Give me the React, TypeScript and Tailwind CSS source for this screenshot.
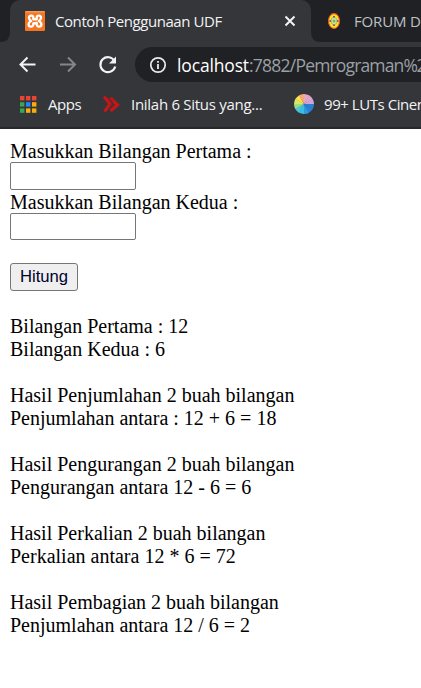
import React from "react";

const ui = "font-['Open_Sans','Noto_Sans',sans-serif] whitespace-nowrap";

function XamppIcon() {
  return (
    <svg width="20" height="20" viewBox="0 0 20 20" className="shrink-0">
      <rect width="20" height="20" rx="1" fill="#f37623" />
      <path d="M.5 .8h19" stroke="#f9a468" strokeWidth="1.200" />
      <path
        d="M8.300 8.300V6.200C8.300 4 4 4 4 6.700C4 8.300 5 9.200 6.200 10C4.800 10.700 3.600 11.600 3.600 13.400C3.600 16.300 8.300 16.300 8.300 13.600V12.300L11.700 12V13.600C11.700 16.300 16.400 16.300 16.400 13.400C16.400 11.600 15.200 10.700 13.800 10C15 9.200 16 8.300 16 6.700C16 4 11.700 4 11.700 6.200V8.300Z"
        fill="none"
        stroke="#fff"
        strokeWidth="2.300"
        strokeLinejoin="round"
      />
    </svg>
  );
}

function CampusIcon() {
  return (
    <svg width="14" height="18" viewBox="0 0 14 18" className="shrink-0">
      <ellipse cx="7" cy="9" rx="5.500" ry="7.400" fill="#ffe61c" stroke="#ed5a2c" strokeWidth="1.100" />
      <ellipse cx="7" cy="9" rx="3" ry="3.800" fill="#d8dc9e" stroke="#b5a94c" strokeWidth=".8" />
      <path d="M6.200 4h1.600v1.600H6.200zM6.200 12.400h1.600V14H6.200zM2.400 8.200H4v1.600H2.400zM10 8.200h1.600v1.600H10z" fill="#3c4bb5" />
      <circle cx="7" cy="9" r="1.500" fill="#77bd43" />
    </svg>
  );
}

function AppsIcon() {
  const colors = ["#ea4335", "#ea4335", "#ea4335", "#34a853", "#2684fc", "#fbad09", "#34a853", "#fbad09", "#fbad09"];
  return (
    <svg width="17" height="17" viewBox="0 0 17 17" className="shrink-0">
      {colors.map((c, i) => (
        <rect key={i} x={(i % 3) * 6} y={Math.floor(i / 3) * 6.2} width="4.400" height="4.400" fill={c} />
      ))}
    </svg>
  );
}

function WheelIcon() {
  const colors = ["#e6a8c6", "#e2a6cc", "#d0a6d8", "#287fd5", "#2f7fd2", "#2b9be0", "#38bee6", "#48c6dc", "#9bdc83", "#d6e86a", "#ffe14e", "#f5a878"];
  return (
    <svg width="20" height="20" viewBox="-10 -10 20 20" className="shrink-0">
      {colors.map((c, i) => (
        <path key={i} d="M0 0V-10A10 10 0 0 1 5.300-8.500Z" fill={c} transform={`rotate(${i * 30})`} />
      ))}
    </svg>
  );
}

function TabStrip() {
  return (
    <div className="flex h-[42px] bg-[#202124]">
      <svg width="10" height="42" className="shrink-0">
        <path d="M0 42Q10 42 10 32V42Z" fill="#35363a" />
      </svg>
      <div className="flex h-[42px] w-[301px] shrink-0 items-center rounded-t-[10px] bg-[#35363a] pl-[15px]">
        <XamppIcon />
        <span className={`${ui} ml-[10px] w-[220px] text-[15px] leading-[20px] tracking-[-0.430px] text-[#f1f3f4]`}>
          Contoh Penggunaan UDF
        </span>
        <svg width="12" height="12" viewBox="0 0 12 12" className="ml-[9px] shrink-0">
          <path d="M1.500 1.500l9 9m0-9l-9 9" stroke="#f1f3f4" strokeWidth="2" />
        </svg>
      </div>
      <svg width="10" height="42" className="shrink-0">
        <path d="M0 32Q0 42 10 42H0Z" fill="#35363a" />
      </svg>
      <div className="flex items-center pl-[6px]">
        <CampusIcon />
        <span className={`${ui} ml-[13px] text-[15px] leading-[20px] tracking-[-0.150px] text-[#bdc1c6]`}>FORUM D</span>
      </div>
    </div>
  );
}

function Toolbar() {
  return (
    <div className="flex h-[45px] items-center">
      <svg width="135" height="45" viewBox="0 42 135 45" fill="none" className="shrink-0">
        <path d="M35.500 64.500H21M27.500 57.500L20.500 64.500L27.500 71.500" stroke="#f1f3f4" strokeWidth="2" />
        <path d="M60 64.500H75M68 57.500L75 64.500L68 71.500" stroke="#85868a" strokeWidth="2" />
        <path d="M114.500 61A7.500 7.500 0 1 0 115.200 66.500" stroke="#f1f3f4" strokeWidth="2.100" />
        <path d="M116 56.500V63.500H109Z" fill="#f1f3f4" />
      </svg>
      <div className="flex h-[35px] flex-1 items-center rounded-l-full bg-[#202124] pl-[14px]">
        <svg width="18" height="18" viewBox="0 0 18 18" fill="none" className="shrink-0">
          <circle cx="9" cy="9" r="7.200" stroke="#e8eaed" strokeWidth="1.700" />
          <path d="M9 8v5M9 5v1.800" stroke="#e8eaed" strokeWidth="1.800" />
        </svg>
        <span className={`${ui} ml-[10px] text-[17.500px] leading-[24px] tracking-[-0.850px] text-[#9aa0a6]`}>
          <span className="tracking-[-0.150px] text-white">localhost</span>
          <span className="tracking-[-0.750px]">:7882/</span>Pemrograman<span className="tracking-[-1.500px]">%2</span>
        </span>
      </div>
    </div>
  );
}

function Bookmarks() {
  return (
    <div className="flex h-[42px] items-center border-b-2 border-[#27282b] pb-[6px] pl-[20px] text-[#f1f3f4]">
      <AppsIcon />
      <span className={`${ui} ml-[11px] w-[54px] shrink-0 text-[15px] leading-[20px] tracking-[-0.450px]`}>Apps</span>
      <svg width="20" height="18" viewBox="0 0 20 18" fill="none" className="shrink-0">
        <path d="M2 1.500L8 9L2.500 16.500M8.500 3L15.500 10L8.500 16" stroke="#c51618" strokeWidth="3.200" />
        <path d="M8 9L12 12M11 6L6 3" stroke="#a51517" strokeWidth="1.200" />
      </svg>
      <span className={`${ui} ml-[9px] w-[163px] shrink-0 text-[15px] leading-[20px] tracking-[-0.280px]`}>Inilah 6 Situs yang...</span>
      <WheelIcon />
      <span className={`${ui} ml-[10px] text-[15px] leading-[20px] tracking-[-0.450px]`}>99+ LUTs Cinen</span>
    </div>
  );
}

const results = [
  ["Bilangan Pertama : 12", "Bilangan Kedua : 6"],
  ["Hasil Penjumlahan 2 buah bilangan", "Penjumlahan antara : 12 + 6 = 18"],
  ["Hasil Pengurangan 2 buah bilangan", "Pengurangan antara 12 - 6 = 6"],
  ["Hasil Perkalian 2 buah bilangan", "Perkalian antara 12 * 6 = 72"],
  ["Hasil Pembagian 2 buah bilangan", "Penjumlahan antara 12 / 6 = 2"],
];

export default function App() {
  return (
    <div className="h-[688px] w-[421px] overflow-hidden bg-white">
      <header className="h-[129px] overflow-hidden bg-[#35363a]">
        <TabStrip />
        <Toolbar />
        <Bookmarks />
      </header>
      <main className="px-[10px] pt-[10px] font-['Liberation_Serif',serif] text-[20px] leading-[25px] text-black">
        <form onSubmit={(e) => e.preventDefault()}>
          <label className="block h-[23px]" htmlFor="first">Masukkan Bilangan Pertama :</label>
          <input id="first" className="block h-[28px] w-[126px] rounded-[2px] border border-[#767676] bg-white" />
          <label className="block h-[23px]" htmlFor="second">Masukkan Bilangan Kedua :</label>
          <input id="second" className="block h-[27px] w-[126px] rounded-[2px] border border-[#767676] bg-white" />
          <button className="mt-[23px] block h-[28px] w-[68px] rounded-[3px] border border-[#767676] bg-[#efefef] font-['Liberation_Sans',sans-serif] text-[16.670px] leading-[24px] text-[#00002e]">
            Hitung
          </button>
        </form>
        {results.map(([title, value]) => (
          <section key={title} className="mt-[23px]">
            <p className="h-[23px]">{title}</p>
            <p className="h-[23px]">{value}</p>
          </section>
        ))}
      </main>
    </div>
  );
}
